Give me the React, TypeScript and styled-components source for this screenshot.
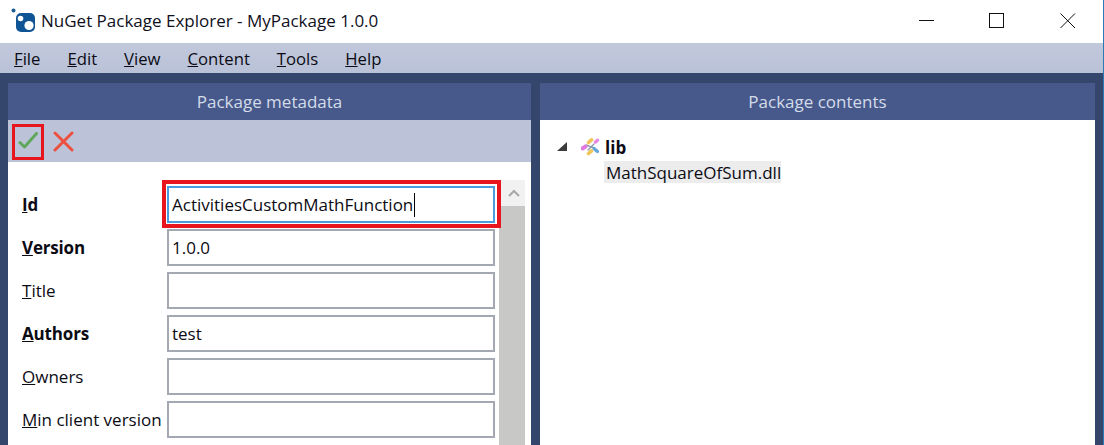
import React from "react";
import styled, { createGlobalStyle } from "styled-components";

const Global = createGlobalStyle`
  html, body { margin: 0; padding: 0; background: #fff; }
  #root { width: 1104px; height: 445px; overflow: hidden; }
`;

const FONT = `"Open Sans", "Noto Sans", "Liberation Sans", sans-serif`;

const Win = styled.div`
  width: 1104px;
  height: 445px;
  display: flex;
  flex-direction: column;
  overflow: hidden;
  box-sizing: border-box;
  border-right: 1px solid #2a7ab8;
  font-family: ${FONT};
  color: #0b0b14;
`;

const TitleBar = styled.header`
  height: 43px;
  flex: none;
  box-sizing: border-box;
  display: flex;
  align-items: center;
  background: #fff;
  padding: 0 0 2px 11px;
`;

const Title = styled.div`
  margin-left: 5px;
  font-size: 17px;
  color: #10101c;
`;

const Controls = styled.div`
  margin-left: auto;
  display: flex;
  align-items: center;
`;

const Ctl = styled.div`
  width: 70.5px;
  display: flex;
  justify-content: center;
`;

const MenuBar = styled.nav`
  height: 30px;
  flex: none;
  display: flex;
  align-items: center;
  gap: 27px;
  padding-left: 14px;
  background: linear-gradient(#c1c8dc, #bac2d8);
  font-size: 16.7px;
`;

const Body = styled.div`
  flex: 1;
  min-height: 0;
  display: grid;
  grid-template-columns: 523px 555px;
  column-gap: 9px;
  padding: 10px 8px 0;
  background: #34466c;
`;

const Panel = styled.section`
  display: flex;
  flex-direction: column;
  min-height: 0;
`;

const PanelHead = styled.div`
  height: 37px;
  flex: none;
  display: flex;
  align-items: center;
  justify-content: center;
  background: #47598a;
  color: #d4dcea;
  font-size: 17px;
`;

const Toolbar = styled.div`
  height: 42px;
  flex: none;
  display: flex;
  align-items: center;
  gap: 3px;
  padding: 0 0 0 4px;
  background: #bcc3d9;
`;

const ToolBtn = styled.button<{ $marked?: boolean }>`
  width: 32px;
  height: 36px;
  padding: 0;
  margin: 1px 0 0;
  display: flex;
  align-items: center;
  justify-content: center;
  box-sizing: border-box;
  background: transparent;
  border: 3px solid ${(p) => (p.$marked ? "#e8141e" : "transparent")};
`;

const MetaBody = styled.div`
  flex: 1;
  min-height: 0;
  display: flex;
  background: #fff;
  padding: 18px 6px 0 14px;
`;

const Form = styled.div`
  width: 477px;
  flex: none;
  display: grid;
  grid-template-columns: 145px 328px;
  grid-auto-rows: 37px;
  row-gap: 6px;
  padding-top: 6px;
  align-items: center;
`;

const Label = styled.label<{ $bold?: boolean }>`
  font-size: 17px;
  font-weight: ${(p) => (p.$bold ? 700 : 400)};
  white-space: nowrap;
  letter-spacing: ${(p) => (p.$bold ? "-0.01em" : "0")};
`;

const Field = styled.div<{ $focus?: boolean }>`
  height: 37px;
  box-sizing: border-box;
  border: 2px solid ${(p) => (p.$focus ? "#4a9be0" : "#a3a8b2")};
  background: #fff;
  display: flex;
  align-items: center;
  padding-left: 3px;
  font-size: 17px;
`;

const Mark = styled.div`
  position: relative;
  z-index: 1;
  align-self: start;
  margin: -6px 0 0 -5px;
  padding: 2px 2px 1px 1px;
  border: 4px solid #e8141e;
  width: 328px;
  background: #fff;
`;

const Caret = styled.span`
  display: inline-block;
  width: 1px;
  height: 24px;
  background: #000;
  margin-left: 1px;
`;

const Scroll = styled.div`
  width: 26px;
  flex: none;
  display: flex;
  flex-direction: column;
  background: #c8c8c6;
`;

const ScrollUp = styled.div`
  height: 26px;
  flex: none;
  background: #f1f1f1;
  display: flex;
  align-items: center;
  justify-content: center;
  padding-left: 3px;
`;

const TreeBody = styled.div`
  flex: 1;
  background: #fff;
  padding: 16px 0 0 17px;
`;

const TreeRow = styled.div`
  display: flex;
  align-items: center;
  height: 22px;
`;

const TreeBold = styled.span`
  margin-left: 4px;
  font-weight: 700;
  font-size: 17px;
`;

const TreeItem = styled.div`
  margin: 3px 0 0 47px;
  width: 177px;
  height: 22px;
  background: #ececec;
  display: flex;
  align-items: center;
  padding-left: 2px;
  box-sizing: border-box;
  font-size: 17px;
  white-space: nowrap;
`;

const Logo = () => (
  <svg width="25" height="25" viewBox="0 0 25 25">
    <circle cx="2.5" cy="2.5" r="2" fill="#1a5a90" />
    <rect x="5" y="5" width="19" height="19" rx="5" fill="#0f5595" />
    <circle cx="9.5" cy="10.5" r="2.8" fill="#fff" />
    <circle cx="18" cy="17.5" r="4.6" fill="#fff" />
  </svg>
);

const LibIcon = () => (
  <svg width="20" height="18" viewBox="0 0 20 18" fill="none" strokeLinecap="round">
    <path d="M5 7 L13 10 M13 6 L7 12" stroke="#8e9cab" strokeWidth="1.4" />
    <path d="M7.5 4.5 L10.5 1.8" stroke="#f0c65a" strokeWidth="3.6" />
    <path d="M14.5 4 L16.5 2.2" stroke="#e488e4" strokeWidth="3.4" />
    <path d="M1.5 10.5 L4.5 8.5" stroke="#e07ce0" strokeWidth="4" />
    <path d="M7.5 15.5 L10.5 12.8" stroke="#f0c65a" strokeWidth="3.6" />
    <path d="M13 10.5 L16.5 13.5" stroke="#62a6e0" strokeWidth="3.2" />
  </svg>
);

const rows: { key: string; rest: string; bold?: boolean; value?: string; focus?: boolean }[] = [
  { key: "I", rest: "d", bold: true, value: "ActivitiesCustomMathFunction", focus: true },
  { key: "V", rest: "ersion", bold: true, value: "1.0.0" },
  { key: "T", rest: "itle" },
  { key: "A", rest: "uthors", bold: true, value: "test" },
  { key: "O", rest: "wners" },
  { key: "M", rest: "in client version" },
];

const menus: [string, string][] = [
  ["F", "ile"],
  ["E", "dit"],
  ["V", "iew"],
  ["C", "ontent"],
  ["T", "ools"],
  ["H", "elp"],
];

export default function App() {
  return (
    <Win>
      <Global />
      <TitleBar>
        <Logo />
        <Title>NuGet Package Explorer - MyPackage 1.0.0</Title>
        <Controls>
          <Ctl>
            <svg width="16" height="16" viewBox="0 0 16 16">
              <path d="M0 7.5H15" stroke="#111" strokeWidth="1" />
            </svg>
          </Ctl>
          <Ctl>
            <svg width="16" height="16" viewBox="0 0 16 16" fill="none">
              <rect x="0.5" y="0.5" width="14" height="14" stroke="#111" />
            </svg>
          </Ctl>
          <Ctl>
            <svg width="16" height="16" viewBox="0 0 16 16" fill="none">
              <path d="M0.5 0.5L15 15M15 0.5L0.5 15" stroke="#111" />
            </svg>
          </Ctl>
        </Controls>
      </TitleBar>
      <MenuBar>
        {menus.map(([k, r]) => (
          <span key={k}>
            <u>{k}</u>
            {r}
          </span>
        ))}
      </MenuBar>
      <Body>
        <Panel>
          <PanelHead>Package metadata</PanelHead>
          <Toolbar>
            <ToolBtn $marked aria-label="OK">
              <svg width="20" height="20" viewBox="0 0 20 20" fill="none">
                <path d="M2 10.5L6.5 15L18.5 1.5" stroke="#5fa85c" strokeWidth="3" strokeLinecap="round" strokeLinejoin="round" />
              </svg>
            </ToolBtn>
            <ToolBtn aria-label="Cancel">
              <svg width="21" height="21" viewBox="0 0 21 21" fill="none">
                <path d="M2 2L19 19M19 2L2 19" stroke="#ee5040" strokeWidth="3" strokeLinecap="round" />
              </svg>
            </ToolBtn>
          </Toolbar>
          <MetaBody>
            <Form>
              {rows.map((r) => (
                <React.Fragment key={r.key}>
                  <Label $bold={r.bold}>
                    <u>{r.key}</u>
                    {r.rest}
                  </Label>
                  {r.focus ? (
                    <Mark>
                      <Field $focus>
                        {r.value}
                        <Caret />
                      </Field>
                    </Mark>
                  ) : (
                    <Field>{r.value}</Field>
                  )}
                </React.Fragment>
              ))}
            </Form>
            <Scroll>
              <ScrollUp>
                <svg width="12" height="8" viewBox="0 0 12 8" fill="none">
                  <path d="M1 7L6 2L11 7" stroke="#a8a8a8" strokeWidth="2" />
                </svg>
              </ScrollUp>
            </Scroll>
          </MetaBody>
        </Panel>
        <Panel>
          <PanelHead>Package contents</PanelHead>
          <TreeBody>
            <TreeRow>
              <svg width="24" height="12" viewBox="0 0 24 12">
                <path d="M10 1V10H0Z" fill="#3c3c3c" />
              </svg>
              <LibIcon />
              <TreeBold>lib</TreeBold>
            </TreeRow>
            <TreeItem>MathSquareOfSum.dll</TreeItem>
          </TreeBody>
        </Panel>
      </Body>
    </Win>
  );
}
